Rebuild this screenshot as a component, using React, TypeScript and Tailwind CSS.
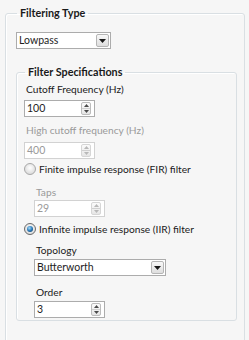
import React from "react";

const font = { fontFamily: 'Lato, "Open Sans", sans-serif' };

function SpinArrows({ disabled }: { disabled?: boolean }) {
  const c = disabled ? "#b8b8b8" : "#4a4a4a";
  return (
    <div
      className={`flex h-[13px] w-[10px] flex-col rounded-[2px] border ${
        disabled ? "border-[#d6d6d6]" : "border-[#bcbcbc]"
      } bg-gradient-to-b from-[#fbfbfb] to-[#e6e6e6]`}
    >
      <div className="flex flex-1 items-center justify-center border-b border-[#d0d0d0]">
        <svg width="5" height="3" viewBox="0 0 5 3">
          <path d="M0 3 L2.5 0 L5 3 Z" fill={c} />
        </svg>
      </div>
      <div className="flex flex-1 items-center justify-center">
        <svg width="5" height="3" viewBox="0 0 5 3">
          <path d="M0 0 L2.5 3 L5 0 Z" fill={c} />
        </svg>
      </div>
    </div>
  );
}

function Spin({ value, disabled }: { value: string; disabled?: boolean }) {
  return (
    <div
      className={`flex h-[17px] w-[71px] items-center border bg-white pl-[2px] pr-[3px] ${
        disabled ? "border-[#d2d2d2] text-[#9a9a9a]" : "border-[#acacac] text-[#1e1e1e]"
      }`}
    >
      <span className="flex-1 text-[10.5px] leading-none">{value}</span>
      <SpinArrows disabled={disabled} />
    </div>
  );
}

function Select({ value, width }: { value: string; width: string }) {
  return (
    <div className={`flex h-[17px] ${width} items-center border border-[#acacac] bg-white pl-[2px] pr-[1px]`}>
      <span className="flex-1 text-[10.5px] leading-none text-[#1e1e1e]">{value}</span>
      <div className="flex h-[13px] w-[13px] items-center justify-center rounded-[2px] border border-[#b5b5b5] bg-gradient-to-b from-[#f8f8f8] to-[#dedede]">
        <svg width="7" height="4" viewBox="0 0 7 4">
          <path d="M0 0 L7 0 L3.5 4 Z" fill="#1a1a1a" />
        </svg>
      </div>
    </div>
  );
}

function Radio({ checked, label }: { checked?: boolean; label: string }) {
  return (
    <div className="flex h-[14px] items-center gap-[3px]">
      <svg width="12" height="12" viewBox="0 0 12 12">
        <defs>
          <radialGradient id={checked ? "rgc" : "rgu"} cx="50%" cy="40%" r="60%">
            <stop offset="0%" stopColor="#ffffff" />
            <stop offset="100%" stopColor="#d8d8d8" />
          </radialGradient>
          <radialGradient id="dot" cx="40%" cy="35%" r="70%">
            <stop offset="0%" stopColor="#a9dcf6" />
            <stop offset="60%" stopColor="#2f7fbf" />
            <stop offset="100%" stopColor="#134f7f" />
          </radialGradient>
        </defs>
        <circle cx="6" cy="6" r="5.5" fill={`url(#${checked ? "rgc" : "rgu"})`} stroke={checked ? "#6a6a6a" : "#a8a8a8"} />
        {checked && <circle cx="6" cy="6" r="3" fill="url(#dot)" />}
      </svg>
      <span className="text-[10.2px] leading-none text-[#1a1a1a]">{label}</span>
    </div>
  );
}

function Label({ children, disabled }: { children: React.ReactNode; disabled?: boolean }) {
  return (
    <div className={`text-[10.2px] leading-[14px] ${disabled ? "text-[#9a9a9a]" : "text-[#1a1a1a]"}`}>
      {children}
    </div>
  );
}

export default function App() {
  return (
    <div className="h-[340px] w-[249px] overflow-hidden bg-[#f6f6f6]" style={font}>
      <fieldset className="ml-[5px] mt-[6px] h-[345px] w-[240px] rounded-[3px] border border-[#d9dfe3] pl-[10px] shadow-[inset_1px_1px_0_#ffffff]">
        <legend className="ml-[1px] px-[3px] text-[10.8px] font-bold leading-[14px] text-[#1a1a1a]">
          Filtering Type
        </legend>
        <div className="mt-[12px]">
          <Select value="Lowpass" width="w-[95px]" />
        </div>
        <fieldset className="mt-[16px] h-[256px] w-[221px] rounded-[3px] border border-[#d9dfe3] pl-[7px] shadow-[inset_1px_1px_0_#ffffff]">
          <legend className="ml-[1px] px-[3px] text-[10.8px] font-bold leading-[14px] text-[#1a1a1a]">
            Filter Specifications
          </legend>
          <div className="flex flex-col">
            <div className="mt-[3px] pl-[2px]">
              <Label>Cutoff Frequency (Hz)</Label>
            </div>
            <div className="mt-[4px]">
              <Spin value="100" />
            </div>
            <div className="mt-[6px] pl-[2px]">
              <Label disabled>High cutoff frequency (Hz)</Label>
            </div>
            <div className="mt-[5px]">
              <Spin value="400" disabled />
            </div>
            <div className="mt-[3px]">
              <Radio label="Finite impulse response (FIR) filter" />
            </div>
            <div className="flex flex-col pl-[10px]">
              <div className="mt-[9px] pl-[2px]">
                <Label disabled>Taps</Label>
              </div>
              <div className="mt-[1px]">
                <Spin value="29" disabled />
              </div>
            </div>
            <div className="mt-[5px]">
              <Radio checked label="Infinite impulse response (IIR) filter" />
            </div>
            <div className="flex flex-col pl-[10px]">
              <div className="mt-[7px] pl-[2px]">
                <Label>Topology</Label>
              </div>
              <div className="mt-[2px]">
                <Select value="Butterworth" width="w-[132px]" />
              </div>
              <div className="mt-[9px] pl-[2px]">
                <Label>Order</Label>
              </div>
              <div className="mt-[2px]">
                <Spin value="3" />
              </div>
            </div>
          </div>
        </fieldset>
      </fieldset>
    </div>
  );
}
